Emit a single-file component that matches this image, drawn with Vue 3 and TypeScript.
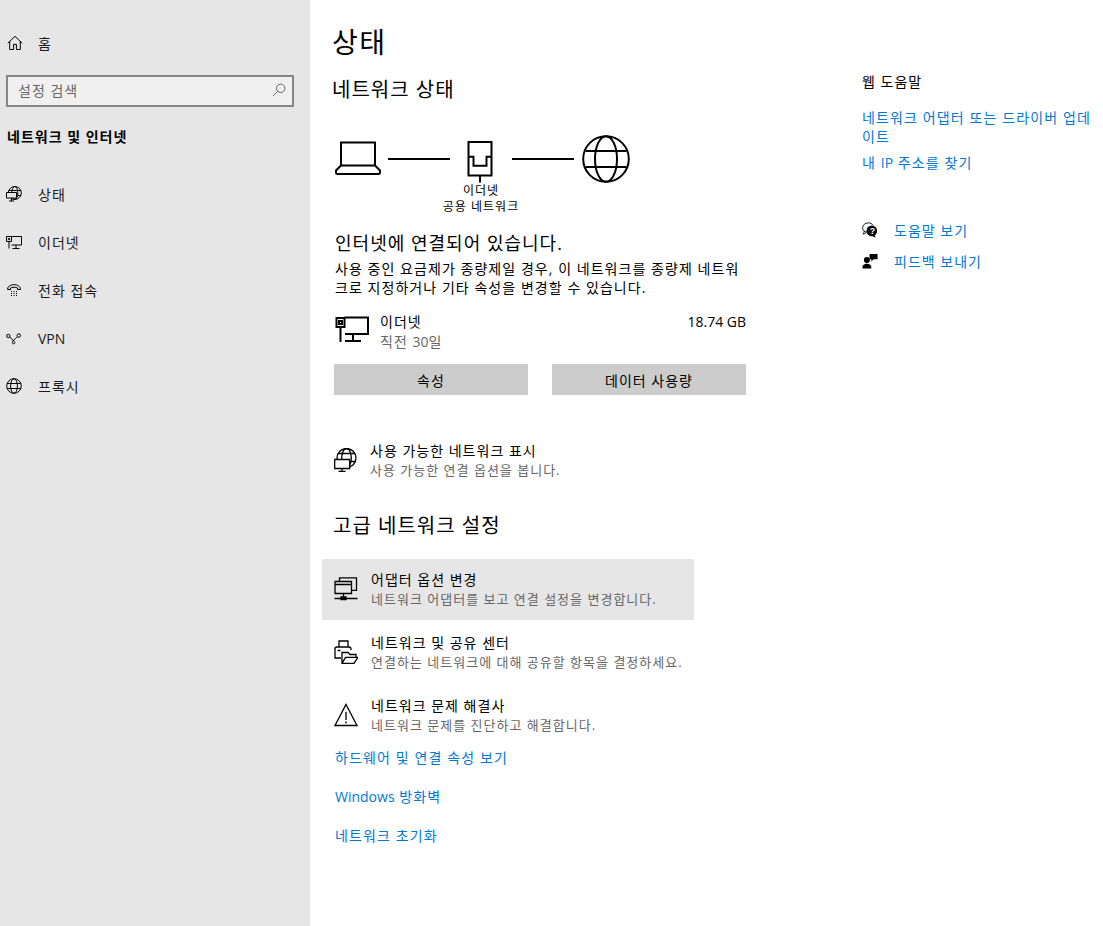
<template>
  <div class="page">
    <aside class="sidebar">
      <div class="home">
        <svg class="nav-icon" viewBox="0 0 16 16"><path d="M.8 8.200 8 1.300l7.200 6.900M2.700 6.500v8h3.900V9.300h2.800v5.200h3.900v-8" /></svg>
        <span>홈</span>
      </div>
      <div class="search">
        <span>설정 검색</span>
        <svg viewBox="0 0 14 14"><circle cx="8.700" cy="5.300" r="4.200" /><path d="M5.700 8.300 1 13" /></svg>
      </div>
      <h3 class="side-title">네트워크 및 인터넷</h3>
      <nav>
        <a class="nav-item">
          <svg class="nav-icon" viewBox="0 0 16 16"><circle cx="8.800" cy="7" r="6.500" /><ellipse cx="8.800" cy="7" rx="3" ry="6.500" /><path d="M2.500 4.500h12.600M11 9.500h4" /><path class="bg" d="M.5 6.500h10v5.500H.5z" /><path d="M5.500 12v3M3 15h5" /></svg>
          <span>상태</span>
        </a>
        <a class="nav-item">
          <svg class="nav-icon" viewBox="0 0 16 16"><path d="M4.500 2.500h11v8.500H5.500M10 11v3M6.500 14.500h7" /><path d="M.5 2.500h5v5h-5zM3 7.500v7M2.300 4.500h1.400v1.200H2.300z" /></svg>
          <span>이더넷</span>
        </a>
        <a class="nav-item">
          <svg class="nav-icon" viewBox="0 0 16 16"><path d="M1.500 7.500C1.500 1 14.500 1 14.500 7.500h-3V6c-2-1-5-1-7 0v1.500z" /><path class="dots" d="M5 9.500h6M5 11.500h6M5 13.500h6" /></svg>
          <span>전화 접속</span>
        </a>
        <a class="nav-item">
          <svg class="nav-icon" viewBox="0 0 16 16"><circle cx="2.300" cy="6" r="1.700" /><circle cx="12.800" cy="5.500" r="1.700" /><path d="M3.800 7 8.500 11.800C10 13.500 7 14.800 6.300 12.800 6 11 9 9 11.300 6.800" /></svg>
          <span class="latin">VPN</span>
        </a>
        <a class="nav-item">
          <svg class="nav-icon" viewBox="0 0 16 16"><circle cx="8" cy="8" r="7.300" /><ellipse cx="8" cy="8" rx="3.400" ry="7.300" /><path d="M1.300 5.500h13.400M1.300 10.500h13.400" /></svg>
          <span>프록시</span>
        </a>
      </nav>
    </aside>

    <main class="main">
      <h1>상태</h1>
      <h2 class="first-head">네트워크 상태</h2>

      <div class="diagram">
        <svg class="laptop" viewBox="0 0 48 34"><path d="M7 1.500h34v23H7zM7 24.500 2 29.500v2c0 .8.500 1.500 1.300 1.500h41.400c.8 0 1.300-.7 1.300-1.500v-2L41 24.500" /></svg>
        <span class="link-line"></span>
        <div class="plug">
          <svg viewBox="0 0 26 42"><path d="M1.500 1h23v33.500h-23zM13 34.500v7" /><path d="M1.500 15.700h5v9h13v-9h5" /></svg>
          <div class="plug-label">이더넷<br />공용 네트워크</div>
        </div>
        <span class="link-line"></span>
        <svg class="globe" viewBox="0 0 48 48"><circle cx="24" cy="24" r="22.800" /><ellipse cx="24" cy="24" rx="11" ry="22.800" /><path d="M3.500 16h41M3.500 32h41" /></svg>
      </div>

      <div class="connected">인터넷에 연결되어 있습니다.</div>
      <p class="connected-text">사용 중인 요금제가 종량제일 경우, 이 네트워크를 종량제 네트워크로 지정하거나 기타 속성을 변경할 수 있습니다.</p>

      <div class="usage">
        <svg viewBox="0 0 34 27"><path d="M9.500 1.500H33V18H10M18 18v7M10 25h16" /><path d="M1.500 2h8v9h-8zM5.500 11v15M4 5h3v3H4z" /></svg>
        <div class="usage-name">
          <div>이더넷</div>
          <div class="muted">직전 <span class="latin">30</span>일</div>
        </div>
        <div class="usage-size latin">18.74 GB</div>
      </div>

      <div class="buttons">
        <button>속성</button>
        <button>데이터 사용량</button>
      </div>

      <div class="row show-networks">
        <svg viewBox="0 0 24 24"><circle cx="12.500" cy="10" r="9.500" /><ellipse cx="12.500" cy="10" rx="4.800" ry="9.500" /><path d="M4 5.500h17M17 13.500h4.500" /><path class="white" d="M.7 11.500h15v9H.7z" /><path d="M8 20.500v3M4.500 23.500h7" /></svg>
        <div>
          <div class="row-title">사용 가능한 네트워크 표시</div>
          <div class="row-sub">사용 가능한 연결 옵션을 봅니다.</div>
        </div>
      </div>

      <h2 class="advanced-head">고급 네트워크 설정</h2>

      <div class="row adv active">
        <svg viewBox="0 0 24 24"><path d="M5.500 4.500V.8h17v12.500h-5" /><path d="M1 4.500h16.500v12H1zM1 7.500h16.500" /><path d="M9.500 16.500v3.500M.5 21.500h23M7 20h5v2.500H7z" /></svg>
        <div>
          <div class="row-title">어댑터 옵션 변경</div>
          <div class="row-sub">네트워크 어댑터를 보고 연결 설정을 변경합니다.</div>
        </div>
      </div>
      <div class="row adv">
        <svg viewBox="0 0 24 24"><path d="M5 7V1h9v6M7 18H1V9a2 2 0 0 1 2-2h12a2 2 0 0 1 2 2v1" /><path d="M3.500 10.500h3M8 14v-1.500h6l2 2h6v3" /><path d="M8 14v9.300l3.500-6H24l-4 6H8" /></svg>
        <div>
          <div class="row-title">네트워크 및 공유 센터</div>
          <div class="row-sub">연결하는 네트워크에 대해 공유할 항목을 결정하세요.</div>
        </div>
      </div>
      <div class="row adv">
        <svg viewBox="0 0 24 24"><path d="M12 1.500 23 22.500H1zM12 9v8M12 18.500v2" /></svg>
        <div>
          <div class="row-title">네트워크 문제 해결사</div>
          <div class="row-sub">네트워크 문제를 진단하고 해결합니다.</div>
        </div>
      </div>

      <div class="links">
        <a>하드웨어 및 연결 속성 보기</a>
        <a><span class="latin">Windows</span> 방화벽</a>
        <a>네트워크 초기화</a>
      </div>
    </main>

    <aside class="help">
      <div class="help-title">웹 도움말</div>
      <a class="help-link">네트워크 어댑터 또는 드라이버 업데이트</a>
      <a class="help-link ip">내 <span class="latin">IP</span> 주소를 찾기</a>
      <div class="help-action first">
        <svg viewBox="0 0 18 18"><path d="M5.500 11.500C2.500 11 .7 9 .7 6.500.7 3.500 3.500 1 7 1c2.500 0 4.500 1 5.500 3M2.500 10c0 1.500-.5 2.500-1.500 3.500 1.500 0 3-.7 3.700-1.500" /><circle class="fill" cx="11" cy="10" r="6" /><path class="fill" d="M14 14c0 1.500.8 2.500 2 3.200-2 0-4-.7-5-2z" /><text x="8.600" y="13.500">?</text></svg>
        <a>도움말 보기</a>
      </div>
      <div class="help-action">
        <svg viewBox="0 0 18 18"><circle class="fill" cx="5.500" cy="8" r="3.400" /><path class="fill" d="M.5 17.500v-1.500c0-2.500 2-4 5-4s5 1.500 5 4v1.500zM8.500 1h9v6H13l-2.500 2.500V7h-2z" /></svg>
        <a>피드백 보내기</a>
      </div>
    </aside>
  </div>
</template>

<script setup lang="ts">
</script>

<style>
html,
body {
  margin: 0;
  background: #fff;
}
</style>

<style scoped>
.page {
  display: flex;
  height: 926px;
  overflow: hidden;
  font-family: "Open Sans", "Noto Sans CJK KR", sans-serif;
  font-size: 14px;
  letter-spacing: 0.072em;
  color: #000;
  background: #fff;
}
.latin {
  letter-spacing: 0;
}
svg {
  display: block;
  flex: none;
  fill: none;
  stroke: #000;
}
a {
  color: #0078d7;
  text-decoration: none;
}

.sidebar {
  flex: none;
  width: 310px;
  box-sizing: border-box;
  padding: 33px 16px 0 6px;
  background: #e6e6e6;
}
.home,
.nav-item {
  display: flex;
  align-items: center;
  gap: 16px;
  height: 20px;
  color: #1a1a1a;
}
.home {
  gap: 15px;
  padding-left: 1px;
}
.nav-icon {
  width: 16px;
  height: 16px;
  stroke-width: 1;
}
.bg {
  fill: #e6e6e6;
}
.search {
  display: flex;
  align-items: center;
  justify-content: space-between;
  box-sizing: border-box;
  height: 32px;
  margin-top: 22px;
  padding: 0 6px 2px 10px;
  border: 2px solid #868686;
  background: #f0f0f0;
  color: #666;
}
.search svg {
  width: 14px;
  height: 14px;
  stroke: #666;
}
.side-title {
  margin: 20px 0 0 1px;
  font-size: 14px;
  line-height: 20px;
  font-weight: 700;
}
nav {
  display: flex;
  flex-direction: column;
  gap: 28px;
  margin-top: 37px;
}
.dots {
  stroke-dasharray: 1 1.500;
}

.main {
  flex: none;
  width: 552px;
  box-sizing: border-box;
  padding: 20px 0 0 23px;
}
h1 {
  margin: 0 0 0 -1px;
  font-size: 28px;
  line-height: 44px;
  font-weight: 400;
  letter-spacing: 0.05em;
}
h2 {
  margin: 0;
  font-size: 20px;
  line-height: 28px;
  font-weight: 400;
}
.first-head {
  margin: 12px 0 0 -1px;
}
.diagram {
  display: flex;
  align-items: flex-start;
  margin-top: 29px;
  height: 90px;
}
.laptop {
  width: 48px;
  height: 34px;
  margin: 8px 0 0 1px;
  stroke-width: 2;
}
.link-line {
  flex: none;
  width: 62px;
  height: 2px;
  margin: 25px 0 0 6px;
  background: #000;
}
.plug {
  position: relative;
  flex: none;
  width: 26px;
  margin-left: 17px;
  margin-right: 13px;
}
.plug svg {
  width: 26px;
  height: 42px;
  margin-top: 8px;
  stroke-width: 2;
}
.plug-label {
  position: absolute;
  top: 50px;
  left: -49px;
  width: 126px;
  text-align: center;
  font-size: 12px;
  line-height: 16px;
}
.globe {
  width: 48px;
  height: 48px;
  margin: 2px 0 0 8px;
  stroke-width: 2;
}
.connected {
  margin: 8px 0 0 2px;
  font-size: 18px;
  line-height: 24px;
}
.connected-text {
  width: 412px;
  margin: 4px 0 0 2px;
  line-height: 19px;
  letter-spacing: 0.075em;
}
.usage {
  display: flex;
  width: 411px;
  margin: 15px 0 0 2px;
  line-height: 20px;
}
.usage svg {
  width: 34px;
  height: 27px;
  margin: 4px 11px 0 0;
  stroke-width: 2;
}
.usage-name {
  flex: 1;
}
.muted {
  color: #666;
}
.buttons {
  display: flex;
  gap: 24px;
  margin: 12px 0 0 1px;
}
.buttons button {
  width: 194px;
  height: 31px;
  padding: 0;
  border: 0;
  background: #ccc;
  color: #000;
  font: inherit;
  letter-spacing: inherit;
}
.row {
  display: flex;
  align-items: center;
  gap: 13px;
}
.row svg {
  width: 24px;
  height: 24px;
  stroke-width: 1.300;
}
.white {
  fill: #fff;
}
.row-title {
  line-height: 20px;
}
.row-sub {
  font-size: 13px;
  line-height: 18px;
  color: #666;
}
.show-networks {
  gap: 12px;
  margin: 46px 0 0 1px;
}
.advanced-head {
  margin: 33px 0 0 0;
}
.adv {
  width: 372px;
  height: 61px;
  margin-left: -11px;
  padding: 0 0 2px 12px;
  box-sizing: border-box;
}
.adv + .adv {
  margin-top: 2px;
}
.active {
  margin-top: 19px;
  background: #e6e6e6;
}
.links {
  display: flex;
  flex-direction: column;
  gap: 19px;
  margin: 2px 0 0 2px;
  line-height: 20px;
  letter-spacing: 0.08em;
}

.help {
  flex: none;
  width: 241px;
  padding-top: 72px;
}
.help-title {
  line-height: 20px;
}
.help-link {
  display: block;
  width: 232px;
  line-height: 19px;
  letter-spacing: 0.08em;
}
.help-title + .help-link {
  margin-top: 16px;
}
.ip {
  margin-top: 7px;
  line-height: 20px;
}
.help-action {
  display: flex;
  align-items: center;
  gap: 16px;
  height: 20px;
  margin-top: 11px;
}
.help-action.first {
  margin-top: 47px;
}
.help-action svg {
  width: 16px;
  height: 16px;
}
.fill {
  fill: #000;
  stroke: none;
}
.help-action text {
  font-size: 10px;
  font-weight: 700;
  fill: #fff;
  stroke: none;
  letter-spacing: 0;
  font-family: "Liberation Sans", sans-serif;
}
</style>
